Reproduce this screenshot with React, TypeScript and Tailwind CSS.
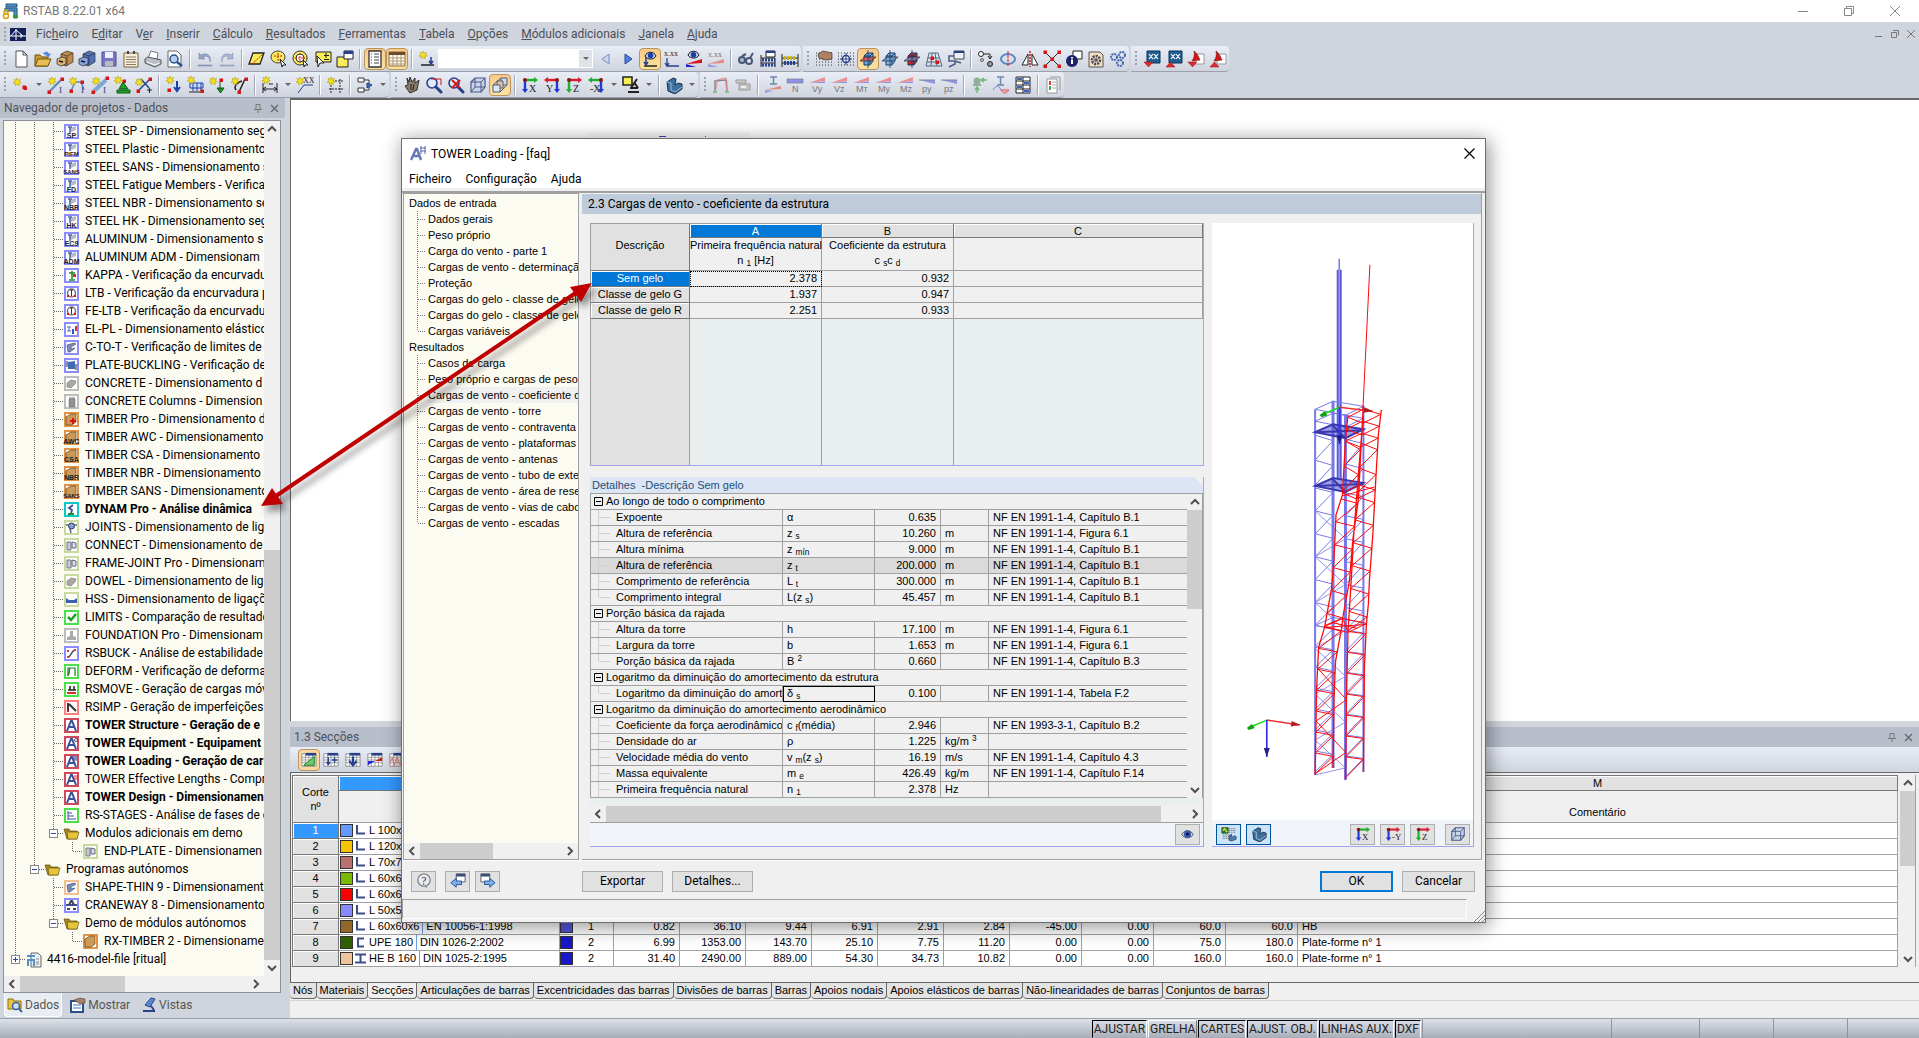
import type { ReactNode } from 'react'
import clsx from 'clsx'

const UI = 'font-[Roboto,sans-serif] text-xs'
const GRID = "font-['Liberation_Sans',Arial,sans-serif] text-[11px]"

/* ---------- toolbar icons, all on an 18x18 grid ---------- */

const Star = ({ x = 4, y = 4 }: { x?: number; y?: number }) => (
  <path
    d={`M${x} ${y - 4}l1 2.3 2.5-1-1.2 2.4 1.9 1-2.4.7.4 2.4-2-1.6-1.8 1.8.1-2.6-2.6-.3 2.1-1.4-1-2.3 2.2.8z`}
    fill="#f6e21b"
    stroke="#a89400"
    strokeWidth=".5"
  />
)

const Dot = ({ x, y }: { x: number; y: number }) => <rect x={x - 1.5} y={y - 1.5} width="3.500" height="3.500" fill="#d81414" />

const Glyph = ({ x, y, size = 8, fill = '#222', serif, children }: { x: number; y: number; size?: number; fill?: string; serif?: boolean; children: ReactNode }) => (
  <text x={x} y={y} fontSize={size} fill={fill} fontFamily={serif ? 'Liberation Serif' : 'Liberation Sans'}>
    {children}
  </text>
)

const Axis = ({ label, a, b, flip }: { label: string; a: string; b: string; flip?: boolean }) => (
  <>
    <path d={flip ? 'M15 4H3' : 'M3 4h11'} stroke={a} strokeWidth="2.4" />
    <path d={flip ? 'M5 1L1 4l4 3z' : 'M13 1l4 3-4 3z'} fill={a} />
    <path d={flip ? 'M14 4v10' : 'M4 4v10'} stroke={b} strokeWidth="2.4" />
    <path d={flip ? 'M11 13l3 4 3-4z' : 'M1 13l3 4 3-4z'} fill={b} />
    <circle cx={flip ? 14 : 4} cy="4" r="2" fill="#8c1414" />
    <Glyph x={flip ? 3 : 8} y={16} size={10} serif>{label}</Glyph>
  </>
)

const Force = ({ label }: { label: string }) => (
  <>
    <path d="M1 7L17 1v4z" fill="#ec8f8f" />
    <path d="M1 7h16v-1.5z" fill="#8a8fdf" />
    <Glyph x={4} y={16} size={9} fill="#777">{label}</Glyph>
  </>
)

const Load = ({ label }: { label: string }) => (
  <>
    <path d="M1 4h16v4z" fill="#8f93ea" />
    <path d="M1 4h16" stroke="#888" />
    <Glyph x={4} y={16} size={9} fill="#777">{label}</Glyph>
  </>
)

const Prism = ({ fill, plane }: { fill: string; plane: string }) => (
  <>
    <path d="M5 6l3-3h6v8l-3 4H5z" fill={fill} stroke="#123a66" />
    <path d="M5 6h6v8M11 6l3-3" stroke="#123a66" fill="none" />
    <path d="M1 11l5-4h11l-5 4z" fill={plane} fillOpacity=".7" stroke="#222" strokeWidth=".7" />
    <path d="M9 0v18" stroke="#123a66" strokeWidth=".8" />
  </>
)

const Lens = () => (
  <>
    <circle cx="7" cy="7" r="5" fill="#dfeaf9" stroke="#27408b" strokeWidth="1.6" />
    <path d="M11 11l5 5" stroke="#27408b" strokeWidth="3" strokeLinecap="round" />
  </>
)

const Drawer = ({ a, b }: { a: string; b: string }) => (
  <>
    <path d="M5 4l6-3 6 2v9l-7 4-5-2z" fill={a} stroke="#333" strokeWidth=".7" />
    <path d="M5 4l6 2 6-3M11 6v10" stroke="#333" strokeWidth=".7" fill="none" />
    <path d="M1 9l5-2 4 1v6l-5 2-4-2z" fill={b} stroke="#222" strokeWidth=".7" />
    <path d="M3 11l4 1" stroke="#111" strokeWidth="1.4" />
  </>
)

const Cube = () => (
  <>
    <path d="M2 6l4-4h10v9l-4 5H2z" fill="#c9d4ea" stroke="#4a5a86" strokeWidth="1.2" />
    <path d="M2 6h10v10M12 6l4-4M6 2v9h10M6 11l-4 5" stroke="#4a5a86" fill="none" />
  </>
)

const Solid = () => (
  <>
    <path d="M2 6l6-4 3 1-1 6 3-2 4 1v5l-7 5-7-3z" fill="#3f6f9f" stroke="#12263c" strokeWidth=".9" />
    <path d="M2 6l4 1v7l4 2 7-5" stroke="#9fc4e6" fill="none" strokeWidth=".9" />
  </>
)

const Excel = ({ down, pdf }: { down?: boolean; pdf?: boolean }) => (
  <>
    {pdf ? (
      <>
        <path d="M8 4h9v10H8z" fill="#fff" stroke="#999" />
        <path d="M7 1c4 3 5 7 6 9l-8 1c2-3 3-6 2-10z" fill="#d41616" stroke="#701010" strokeWidth=".6" />
      </>
    ) : (
      <>
        <path d="M4 1h13v12H4z" fill="#1f5f95" stroke="#0f3557" />
        <path d="M6 4l4 5M10 4l-4 5M11 4l4 5M15 4l-4 5" stroke="#fff" strokeWidth="1.2" />
      </>
    )}
    <path d={down ? 'M1 12h9l-4.500 5z' : 'M1 17h9l-4.500-5z'} fill="#e02c2c" stroke="#8a1010" strokeWidth=".5" />
  </>
)

const Dots = () => (
  <path d="M1 3h16M1 6h16M1 9h16M1 12h16M1 15h16" stroke="#333" strokeDasharray="1 2" />
)

const Eye = () => (
  <>
    <path d="M1 9c4-7 12-7 16 0-4 6-12 6-16 0z" fill="#d6dff3" stroke="#222" />
    <circle cx="9" cy="8.500" r="5" fill="#3658b8" />
    <circle cx="9" cy="8.500" r="2" fill="#0a0f30" />
  </>
)

const SheetIcon = ({ children }: { children: ReactNode }) => (
  <>
    <path d="M1 2h16v14H1z" fill="#fff" stroke="#888" />
    <path d="M1 6h16M1 9h16M1 12h16M5 3v13M9 3v13M13 3v13" stroke="#999" />
    <path d="M5 1h12v3H5z" fill="#27408b" />
    {children}
  </>
)

const ICONS: Record<string, ReactNode> = {
  new: <path d="M4 1h7l4 4v12H4zM11 1v4h4" fill="#fff" stroke="#555" />,
  open: (
    <>
      <path d="M1 5h5l2 2h6v9H1z" fill="#c99a34" stroke="#6d5210" />
      <path d="M4 9h13l-3 7H1z" fill="#e8bd55" stroke="#6d5210" />
      <path d="M9 4c2-3 5-3 6 0l2-1-2 4-4-2 2 0" fill="#4d86d8" />
    </>
  ),
  boxBrown: <Drawer a="#c08a4a" b="#e0b373" />,
  boxBlue: <Drawer a="#4f71b8" b="#86a5de" />,
  save: (
    <>
      <path d="M2 2h14v14H2z" fill="#7777c8" stroke="#4c4c92" />
      <path d="M5 2h8v6H5z" fill="#eef" />
      <path d="M5 11h8v5H5z" fill="#bbb" />
    </>
  ),
  clip: (
    <>
      <path d="M2 3h14v14H2z" fill="#f6efe0" stroke="#7b5e32" />
      <path d="M4 7h10M4 9.500h10M4 12h10M4 14.500h10" stroke="#8a7a5a" />
      <path d="M5 1h2v3H5zM11 1h2v3h-2z" fill="#444" />
    </>
  ),
  print: (
    <>
      <path d="M4 8l3-7 7 2-1 6z" fill="#fff" stroke="#777" />
      <path d="M1 9l3-2 13 3v4l-6 3-10-4z" fill="#b9bfc9" stroke="#555" />
      <path d="M3 12l8 3 4-2" stroke="#fff" fill="none" />
    </>
  ),
  preview: (
    <>
      <path d="M2 1h9l4 4v12H2z" fill="#fff" stroke="#666" />
      <circle cx="8" cy="9" r="4" fill="#b5d0ee" stroke="#27508b" strokeWidth="1.500" />
      <path d="M11 12l5 4" stroke="#27508b" strokeWidth="2.500" />
    </>
  ),
  undo: <path d="M3 3v6h6l-2-2c4-2 7 0 7 5 2-7-4-10-9-7zM2 15h14v1H2z" fill="#93a6c6" stroke="#6c7fa2" strokeWidth=".5" />,
  redo: <path d="M15 3v6H9l2-2c-4-2-7 0-7 5-2-7 4-10 9-7zM2 15h14v1H2z" fill="#a5b6d0" stroke="#7e90b0" strokeWidth=".5" />,
  selPoly: (
    <>
      <path d="M5 3h11l-4 11H1z" fill="#f7ec5a" stroke="#222" strokeWidth="1.300" />
      <path d="M4 14L15 4" stroke="#d01414" strokeDasharray="2 1" />
    </>
  ),
  selLasso: (
    <>
      <ellipse cx="8" cy="7" rx="7" ry="6" fill="#f7ec5a" stroke="#444" />
      <path d="M4 6h8M8 3v8" stroke="#d01414" strokeDasharray="2 1" />
      <path d="M10 9l6 6-3 0-1 2z" fill="#fff" stroke="#222" />
    </>
  ),
  selRing: (
    <>
      <circle cx="8" cy="8" r="7" fill="#f7ec5a" stroke="#333" />
      <circle cx="8" cy="8" r="4" fill="#fff" stroke="#333" />
      <path d="M8 3v10M3 8h10" stroke="#d01414" strokeDasharray="2 1" />
      <path d="M11 10l5 5-3 0-1 2z" fill="#fff" stroke="#222" />
    </>
  ),
  selAdd: (
    <>
      <path d="M2 2h15v10H2z" fill="#f7ec5a" stroke="#222" />
      <path d="M12 3v5M10 5.500h5M10 9.500h5" stroke="#222" />
      <path d="M3 6l7 7h-4l-2 4z" fill="#fff" stroke="#222" />
    </>
  ),
  selNew: (
    <>
      <path d="M1 7h11v10H1z" fill="#f7ec5a" stroke="#222" />
      <path d="M8 1h9v8H8z" fill="#fff" stroke="#222" />
      <path d="M8 1h9v3H8z" fill="#27408b" />
    </>
  ),
  list: (
    <>
      <path d="M3 1h12v16H3z" fill="#fff" stroke="#333" strokeWidth="1.300" />
      <path d="M5 4h1M5 7h1M5 10h1M5 13h1M8 4h5M8 7h5M8 10h5M8 13h5" stroke="#444" />
    </>
  ),
  table: (
    <>
      <path d="M1 2h16v14H1z" fill="#fff" stroke="#8b6a3c" />
      <path d="M1 2h16v3H1z" fill="#6b4b2c" />
      <path d="M1 8h16M1 11h16M1 14h16M5 5v11M9 5v11M13 5v11" stroke="#b29264" />
    </>
  ),
  lcNew: (
    <>
      <Star x={5} y={5} />
      <path d="M3 15h13" stroke="#222" strokeWidth="1.500" />
      <path d="M13 7v6M11 11l2 3 2-3" stroke="#27408b" fill="none" strokeWidth="1.500" />
    </>
  ),
  prev: <path d="M12 4L5 9l7 5z" fill="#c9d7f0" stroke="#7690c4" />,
  next: <path d="M6 4l7 5-7 5z" fill="#4f7ee0" stroke="#2a4a9c" />,
  eyeLoad: (
    <>
      <path d="M3 16h13" stroke="#222" strokeWidth="1.500" />
      <path d="M5 6v9M3 12l2 3 2-3" stroke="#27408b" fill="none" strokeWidth="1.500" />
      <path d="M4 6c2-5 9-5 11 0-2 4-9 4-11 0z" fill="#cfdcf5" stroke="#111" />
      <circle cx="9.500" cy="5.500" r="2.800" fill="#1d3fae" />
    </>
  ),
  xxx: (
    <>
      <Glyph x={1} y={6} serif>x.xx</Glyph>
      <path d="M4 8v8h12M2 13l2 3 2-3" stroke="#27408b" fill="none" strokeWidth="1.300" />
    </>
  ),
  eyeRes: (
    <>
      <path d="M1 14l16-5v4z" fill="#d81414" />
      <path d="M1 14v3h10z" fill="#2424c8" />
      <path d="M3 5c2-5 9-5 11 0-2 4-9 4-11 0z" fill="#cfdcf5" stroke="#111" />
      <circle cx="8.500" cy="4.800" r="2.800" fill="#1d3fae" />
    </>
  ),
  xxxRes: (
    <>
      <Glyph x={1} y={7} fill="#777" serif>x.xx</Glyph>
      <path d="M1 14l16-5v4z" fill="#e88b8b" />
      <path d="M1 14v3h10z" fill="#9a9ae0" />
    </>
  ),
  gears: (
    <>
      <circle cx="5" cy="10" r="3" fill="#aeb8cc" stroke="#4a5878" strokeWidth="2" />
      <circle cx="12" cy="11" r="3" fill="#dfe4ee" stroke="#4a5878" strokeWidth="2" />
      <path d="M5 6l4-2M13 8l3-5" stroke="#4a5878" strokeWidth="2" />
    </>
  ),
  abacusWin: (
    <>
      <path d="M2 8h14v9M2 5v12M2 13h14" stroke="#222" fill="none" />
      <path d="M3 10h13M3 15h13" stroke="#27408b" strokeWidth="3" strokeDasharray="2 1" />
      <path d="M7 1h9v6H7z" fill="#fff" stroke="#222" />
      <path d="M7 1h9v2H7z" fill="#27408b" />
    </>
  ),
  abacus: (
    <>
      <path d="M1 4v13M17 4v13M1 8h16M1 13h16" stroke="#222" fill="none" />
      <path d="M3 8h12" stroke="#c8b81a" strokeWidth="4" strokeDasharray="2 1" />
      <path d="M3 13h12" stroke="#27408b" strokeWidth="4" strokeDasharray="2 1" />
    </>
  ),
  handGrid: (
    <>
      <Dots />
      <path d="M3 4l5-3 9 2v6l-6 1-7-2z" fill="#b08060" stroke="#333" strokeWidth=".7" />
    </>
  ),
  snapGrid: (
    <>
      <Dots />
      <circle cx="9" cy="9" r="3.500" fill="#fff" stroke="#27408b" strokeWidth="1.500" />
      <path d="M9 3v12M3 9h12" stroke="#27408b" />
    </>
  ),
  plane1: <Prism fill="#6fa8e0" plane="#f04040" />,
  plane2: <Prism fill="#8fb8e0" plane="#5f97d0" />,
  plane3: <Prism fill="#e02020" plane="#5f97d0" />,
  mesh: (
    <>
      <path d="M4 3h9l4 13H1zM3 8h11M2 12h13M7 3L6 16M10 3l2 13" stroke="#4a6f86" fill="none" />
      <Dot x={7} y={8} />
      <Dot x={12} y={12} />
    </>
  ),
  objWin: (
    <>
      <path d="M7 1h10v8H7z" fill="#e9eef9" stroke="#444" />
      <path d="M7 1h10v2H7z" fill="#27408b" />
      <path d="M7 6H2v5h6v3l-6 3M8 11l6 2" stroke="#4a5a86" fill="none" strokeWidth="1.500" />
    </>
  ),
  copy: (
    <>
      <circle cx="4" cy="4" r="2.500" fill="#fff" stroke="#222" />
      <path d="M7 4h6v4M11 6l2 3 2-3" stroke="#222" fill="none" />
      <circle cx="5" cy="10" r="1.500" fill="#ccc" stroke="#666" />
      <circle cx="13" cy="14" r="2.500" fill="#999" stroke="#222" />
    </>
  ),
  rotate: (
    <>
      <ellipse cx="9" cy="9" rx="7" ry="5" fill="none" stroke="#5d86c0" strokeWidth="2" />
      <path d="M9 1v16" stroke="#d01414" strokeDasharray="3 1" />
    </>
  ),
  mirror: (
    <>
      <path d="M7 4v11H1zM11 4v11h6z" fill="#fff" stroke="#222" />
      <path d="M9 1v16" stroke="#d01414" strokeDasharray="2 1" strokeWidth="1.500" />
    </>
  ),
  cross: (
    <>
      <path d="M2 2l14 14M16 2L2 16" stroke="#222" />
      <Dot x={2} y={2} />
      <Dot x={16} y={2} />
      <Dot x={2} y={16} />
      <Dot x={16} y={16} />
      <Dot x={9} y={9} />
    </>
  ),
  info: (
    <>
      <path d="M8 1h9v8H8z" fill="#fff" stroke="#222" />
      <circle cx="7" cy="11" r="6" fill="#1c2468" />
      <path d="M7 9.500V14M7 7v1.500" stroke="#fff" strokeWidth="2" />
    </>
  ),
  settings: (
    <>
      <path d="M2 2h11l3 3v12H2z" fill="#f3dfc0" stroke="#555" />
      <circle cx="9" cy="10" r="4" fill="none" stroke="#445" strokeWidth="2.500" strokeDasharray="2 1" />
      <circle cx="9" cy="10" r="2" fill="#667" />
    </>
  ),
  cogs: (
    <>
      <circle cx="5" cy="7" r="3" fill="none" stroke="#4868a8" strokeWidth="2" strokeDasharray="2 .8" />
      <circle cx="13" cy="5" r="3" fill="none" stroke="#4868a8" strokeWidth="2" strokeDasharray="2 .8" />
      <circle cx="11" cy="13" r="3" fill="none" stroke="#4868a8" strokeWidth="2" strokeDasharray="2 .8" />
    </>
  ),
  xlsOut: <Excel down />,
  xlsIn: <Excel />,
  pdfOut: <Excel pdf down />,
  pdfIn: <Excel pdf />,
  node: (
    <>
      <Star x={5} y={6} />
      <Dot x={12} y={11} />
      <Dot x={13} y={12} />
    </>
  ),
  line: (
    <>
      <path d="M2 16L15 3" stroke="#5d86c0" strokeWidth="2" />
      <Star x={5} y={5} />
      <Dot x={15} y={3} />
      <Dot x={2} y={16} />
      <Glyph x={12} y={17} size={9} fill="#27408b" serif>I</Glyph>
    </>
  ),
  polyline: (
    <>
      <path d="M2 15L6 6h6l3 8" stroke="#5d86c0" strokeWidth="1.500" fill="none" />
      <Star x={4} y={5} />
      <Dot x={13} y={6} />
      <Dot x={2} y={15} />
      <Glyph x={12} y={17} size={9} fill="#27408b" serif>I</Glyph>
    </>
  ),
  beam: (
    <>
      <path d="M3 15L15 4" stroke="#7ea6d8" strokeWidth="4" />
      <Star x={5} y={5} />
      <Dot x={16} y={2} />
      <Dot x={2} y={16} />
      <Glyph x={12} y={17} size={9} fill="#27408b" serif>I</Glyph>
    </>
  ),
  support: (
    <>
      <Star x={5} y={4} />
      <Dot x={11} y={5} />
      <path d="M10 6l5 7H6zM4 14h13v3H4z" fill="#1fa02a" stroke="#0c5a14" />
    </>
  ),
  hinge: (
    <>
      <path d="M3 15L15 3M6 3l8 9" stroke="#27408b" strokeWidth="1.500" />
      <Star x={4} y={6} />
      <Dot x={15} y={3} />
      <Dot x={3} y={15} />
      <path d="M12 14h5M14.500 12v5" stroke="#222" />
    </>
  ),
  nodeLoad: (
    <>
      <Star x={5} y={4} />
      <Dot x={4} y={14} />
      <path d="M12 5v8M9 11l3 4 3-4" stroke="#1c3fb0" strokeWidth="2" fill="none" />
    </>
  ),
  memberLoad: (
    <>
      <path d="M3 7h13v5H3z" fill="#cddcf5" stroke="#1c3fb0" />
      <path d="M6 7v8M10 7v8M14 7v8" stroke="#1c3fb0" />
      <path d="M2 16h15" stroke="#222" />
      <Star x={4} y={4} />
      <Dot x={15} y={15} />
    </>
  ),
  disp: (
    <>
      <Star x={4} y={5} />
      <Dot x={12} y={4} />
      <path d="M11 6v8M8 12h7l-3.500 5z" fill="#1fa02a" stroke="#0c5a14" />
    </>
  ),
  imperf: (
    <>
      <path d="M8 16L14 3M5 14c-3-4 2-8 6-9" stroke="#222" fill="none" strokeWidth="1.500" />
      <Star x={4} y={5} />
      <Dot x={15} y={3} />
      <Dot x={8} y={16} />
    </>
  ),
  dim: (
    <>
      <Star x={5} y={4} />
      <path d="M2 7v10M16 7v10M2 13h14M5 11l-3 2 3 2M13 11l3 2-3 2M8 8l4 0" stroke="#222" fill="none" />
    </>
  ),
  note: (
    <>
      <Star x={4} y={5} />
      <Glyph x={7} y={7} size={8} serif>XX</Glyph>
      <path d="M17 9H8l-6 8" stroke="#27408b" fill="none" />
    </>
  ),
  guide: (
    <>
      <path d="M3 5h14M3 13h14M5 3v14M14 3v14" stroke="#222" strokeDasharray="2 1" />
      <Star x={5} y={5} />
    </>
  ),
  flow: (
    <>
      <path d="M2 2h6v4H2zM2 12h6v4H2zM8 4h5v4M8 14h5v-3" stroke="#333" fill="#fff" />
      <path d="M11 7l5 2-5 3z" fill="#3f78c8" stroke="#1c3f80" />
    </>
  ),
  hand: (
    <>
      <path d="M4 2l2 4 1-5 2 5 3-4v5l4-3-2 10-7 3-5-7 3-1z" fill="#8a7a6a" stroke="#222" strokeWidth=".9" />
      <path d="M8 8v6M11 8l-1 6" stroke="#222" />
    </>
  ),
  zoomWin: <><Lens /><path d="M6 3h10v6" stroke="#d01414" fill="none" /></>,
  zoomOff: <><Lens /><path d="M5 4l8 8M13 4l-8 8" stroke="#d81414" strokeWidth="2" /></>,
  cube: <Cube />,
  boxes: (
    <>
      <path d="M10 2h6v7h-6z" fill="#cfd8ea" stroke="#4a5a86" />
      <path d="M6 5h6v7H6z" fill="#d8c8a8" stroke="#6a5a66" />
      <path d="M2 9h7v7H2zM2 9l8-7M9 16l7-7" fill="#dfe6f3" stroke="#4a5a86" />
    </>
  ),
  viewX: <Axis label="X" a="#20b030" b="#2038d8" />,
  viewY: <Axis label="Y" a="#d82030" b="#2038d8" flip />,
  viewZ: <Axis label="Z" a="#d82030" b="#20b030" />,
  viewMX: <Axis label="-X" a="#20b030" b="#2038d8" flip />,
  viewMY: <Axis label="-Y" a="#d82030" b="#2038d8" />,
  lamp: (
    <>
      <path d="M1 1h9v8H1z" fill="#f7ec5a" stroke="#222" strokeWidth="1.500" />
      <path d="M15 3l-6 9M8 12h8M6 16h11M12 6l4 6" stroke="#222" strokeWidth="2" />
    </>
  ),
  solid: <Solid />,
  deform: (
    <>
      <path d="M3 16V5l11-1 1 12" stroke="#8a8a8a" fill="none" strokeWidth="1.500" />
      <path d="M3 16C5 10 5 8 5 4l9-2c2 4 0 8 1 14" stroke="#e08888" fill="none" />
      <path d="M1 15h4v2H1zM13 15h4v2h-4z" fill="#8abf90" />
    </>
  ),
  plug: (
    <>
      <path d="M2 4h10v3H2z" fill="#ccc" stroke="#999" />
      <path d="M5 8h11v6H5z" fill="#c4c4c4" stroke="#999" />
      <path d="M7 10h5v2H7z" fill="#eee" />
    </>
  ),
  secForce: (
    <>
      <path d="M6 1h7M9.500 1v7M6 8h7" stroke="#6d86b0" strokeWidth="1.500" />
      <path d="M1 14l16-4v3z" fill="#e08888" />
      <path d="M1 14v3l8-2z" fill="#9a9ae0" />
    </>
  ),
  N: (
    <>
      <path d="M1 3h16v4H1z" fill="#8f93ea" stroke="#777" strokeWidth=".6" />
      <Glyph x={6} y={16} size={9} fill="#777">N</Glyph>
    </>
  ),
  Vy: <Force label="Vy" />,
  Vz: <Force label="Vz" />,
  MT: <Force label="Mт" />,
  My: <Force label="My" />,
  Mz: <Force label="Mz" />,
  py: <Load label="py" />,
  pz: <Load label="pz" />,
  reaction: (
    <>
      <circle cx="7" cy="5" r="3.500" fill="#8fae94" />
      <path d="M3 8h8v2H3z" fill="#8fae94" />
      <path d="M7 17v-5M5 14l2-3 2 3M17 4h-5M14 2l-3 2 3 2" stroke="#6fb87a" fill="none" strokeWidth="1.500" />
    </>
  ),
  secWave: (
    <>
      <path d="M5 1h7M8.500 1v8M5 9h7" stroke="#6d86b0" strokeWidth="1.500" />
      <path d="M1 14c3-5 6-5 8 0" fill="none" stroke="#8080d8" />
      <path d="M9 14c2 4 5 4 8 0z" fill="#f4b0b0" stroke="#d06060" />
    </>
  ),
  sections: (
    <>
      <path d="M2 1h14v16H2z" fill="#fff" stroke="#222" />
      <path d="M2 5h14M2 9h14M2 13h14M9 1v16" stroke="#222" />
      <path d="M3 3h5M10 7h5M3 11h5M10 15h5" stroke="#3d5fc0" strokeWidth="2" />
    </>
  ),
  report: (
    <>
      <path d="M3 3h10v14H3z" fill="#fff" stroke="#999" />
      <path d="M6 1h10v13" stroke="#999" fill="none" />
      <path d="M5 6h2M5 8h2" stroke="#d04040" strokeWidth="2" />
      <path d="M5 11h2M5 13h2" stroke="#40b040" strokeWidth="2" />
      <path d="M8 6h4M8 9h4M8 12h4" stroke="#aaa" />
    </>
  ),
  eye: <Eye />,
  legend: (
    <>
      <path d="M1 2h7v6H1z" fill="#2c8a3a" stroke="#1a4d20" />
      <path d="M2 5l2-2 3 4" stroke="#f0e030" strokeWidth="1.500" fill="none" />
      <path d="M9 3h8M9 5h8M9 7h8M2 10h7M2 12h7M2 14h7" stroke="#555" strokeDasharray="1 1" />
      <path d="M9 11l3-2v4l3-2 2 1v3l-5 2-3-1z" fill="#4f7fae" stroke="#1a3350" strokeWidth=".7" />
    </>
  ),
  help: (
    <>
      <circle cx="9" cy="8" r="7" fill="#e8eaee" stroke="#888" strokeWidth="1.500" />
      <path d="M11 14l2 3-5-2z" fill="#888" />
      <Glyph x={6} y={13} size={13} fill="#1f3a70" serif>?</Glyph>
    </>
  ),
  back: (
    <>
      <path d="M7 1h10v9H7z" fill="#fff" stroke="#555" />
      <path d="M7 1h10v3H7z" fill="#3a4c80" />
      <path d="M13 9H7V6l-6 5 6 5v-3h6z" fill="#7fb0ee" stroke="#1f4a90" />
    </>
  ),
  forward: (
    <>
      <path d="M1 1h10v9H1z" fill="#fff" stroke="#555" />
      <path d="M1 1h10v3H1z" fill="#3a4c80" />
      <path d="M5 9h6V6l6 5-6 5v-3H5z" fill="#7fb0ee" stroke="#1f4a90" />
    </>
  ),
  sheet1: <SheetIcon><path d="M3 15L15 5v10z" fill="#6cc870" stroke="#1f7a28" /></SheetIcon>,
  sheet2: <SheetIcon><path d="M6 6v8M4 11l2 3 2-3M10 9h6M13 6v6" stroke="#27408b" strokeWidth="1.500" fill="none" /></SheetIcon>,
  sheet3: <SheetIcon><path d="M9 5v9M5 10l4 5 4-5" stroke="#27408b" strokeWidth="2.500" fill="none" /></SheetIcon>,
  sheet4: <SheetIcon><path d="M9 10l8-4v4z" fill="#d81414" /><path d="M1 10h8l-8 5z" fill="#2424d8" /></SheetIcon>,
  sheet5: <SheetIcon><path d="M1 11l3-4 2 8 3-9 3 8 4-5" stroke="#e08888" strokeWidth="1.500" fill="none" /></SheetIcon>,
}

const Icon = ({ name, size = 18 }: { name: string; size?: number }) => (
  <svg width={size} height={size} viewBox="0 0 18 18" className="shrink-0" aria-hidden="true">
    {ICONS[name]}
  </svg>
)

/* ---------- toolbars ---------- */

// '|' is a separator, 'v' a drop-down arrow, '*' marks a pressed button
const ROW1 = [
  'new open boxBrown boxBlue save clip print preview | undo redo | selPoly selLasso selRing selAdd selNew | *list *table | lcNew combo prev next *eyeLoad xxx eyeRes xxxRes | gears abacusWin abacus',
  'handGrid snapGrid *plane1 plane2 plane3 mesh objWin | copy rotate mirror cross info settings cogs',
  'xlsOut xlsIn pdfOut pdfIn',
]
const ROW2 = [
  'node v line polyline beam support hinge | nodeLoad memberLoad disp imperf | dim v note | guide | flow v',
  'hand zoomWin zoomOff cube *boxes | viewX viewY viewZ viewMX v lamp v | solid v',
  'deform plug | secForce N Vy Vz MT My Mz py pz | reaction secWave sections | report',
]

const Grip = () => (
  <span className="mx-[3px] my-1 w-1 self-stretch bg-[radial-gradient(circle,#9aa2b0_1px,transparent_1px)] bg-[size:4px_4px]" />
)

function ToolStrip({ items }: { items: string }) {
  return (
    <div className="mr-0.5 flex h-[26px] items-center rounded-r-sm border-b border-[#9aa1ad] bg-linear-to-b from-[#e9edf6] to-[#cfd4de]">
      <Grip />
      {items.split(' ').map((item, i) => {
        if (item === '|') return <span key={i} className="mx-[3px] h-5 w-0.5 border-r border-white bg-[#a3a9b5]" />
        if (item === 'v')
          return (
            <button key={i} type="button" aria-label="Mais" className="flex h-6 w-[13px] items-center justify-center">
              <span className="border-x-3 border-t-3 border-x-transparent border-t-[#666]" />
            </button>
          )
        if (item === 'combo')
          return (
            <span key={i} className="mr-0.5 flex h-[19px] items-center bg-white">
              <select aria-label="Caso de carga" className="h-full w-[140px] appearance-none" />
              <span className="flex h-full w-[15px] items-center justify-center border border-white bg-[#dfe2e8]">
                <span className="border-x-3 border-t-3 border-x-transparent border-t-[#666]" />
              </span>
            </span>
          )
        const on = item.startsWith('*')
        const name = item.replace('*', '')
        return (
          <button
            key={i}
            type="button"
            aria-label={name}
            aria-pressed={on}
            className={clsx('flex h-[22px] w-[22px] items-center justify-center', on && 'rounded-sm border border-[#b8955a] bg-linear-to-b from-[#f9c98a] to-[#fbe3a0]')}
          >
            <Icon name={name} />
          </button>
        )
      })}
    </div>
  )
}

const MENU = [
  ['Fic', 'h', 'eiro'], ['E', 'd', 'itar'], ['V', 'e', 'r'], ['', 'I', 'nserir'], ['', 'C', 'álculo'], ['', 'R', 'esultados'],
  ['', 'F', 'erramentas'], ['', 'T', 'abela'], ['', 'O', 'pções'], ['', 'M', 'ódulos adicionais'], ['', 'J', 'anela'], ['', 'A', 'juda'],
]

function AppHeader() {
  return (
    <header>
      <div className="flex h-[22px] items-center bg-white pr-[19px] pl-0.5 text-[#777]">
        <svg width="17" height="17" viewBox="0 0 17 17" aria-hidden="true">
          <path d="M4 1h11v3H4zM3 5h12v3H3z" fill="#4f93cc" stroke="#20527e" />
          <path d="M12 8v7h3V8" fill="#4f93cc" stroke="#20527e" />
          <path d="M11 12h5v3h-5z" fill="#2ba02b" />
          <circle cx="4" cy="9" r="2" fill="none" stroke="#d8a010" strokeWidth="1.500" />
          <circle cx="4" cy="13" r="2.500" fill="none" stroke="#d8a010" strokeWidth="1.500" />
        </svg>
        <h1 className="ml-1 grow">RSTAB 8.22.01 x64</h1>
        <div className="flex gap-9">
          <button type="button" aria-label="Minimizar"><svg width="10" height="10"><path d="M0 5.500h10" stroke="#888" /></svg></button>
          <button type="button" aria-label="Restaurar"><svg width="10" height="10" fill="none" stroke="#888"><path d="M.5 2.500h7v7h-7zM2.500 2V.5h7v7H8" /></svg></button>
          <button type="button" aria-label="Fechar"><svg width="10" height="10"><path d="M0 0l10 10M10 0L0 10" stroke="#888" /></svg></button>
        </div>
      </div>
      <nav className="flex h-6 items-center pr-1 text-[#4a4f5a]">
        <Grip />
        <svg width="16" height="13" viewBox="0 0 16 13" className="mr-2.5" aria-hidden="true">
          <path d="M0 0h16v13H0z" fill="#16205c" />
          <path d="M0 8h16M6 1v11M6 2l7 6M6 2L1 8M11 6v4" stroke="#fff" fill="none" />
        </svg>
        <div className="flex grow gap-[13px]">
          {MENU.map(([a, key, b]) => (
            <button key={a + key + b} type="button">{a}<u>{key}</u>{b}</button>
          ))}
        </div>
        <div className="flex gap-2">
          <button type="button" aria-label="Minimizar documento"><svg width="8" height="8"><path d="M0 6.500h7" stroke="#777" /></svg></button>
          <button type="button" aria-label="Restaurar documento"><svg width="8" height="8" fill="none" stroke="#777"><path d="M.5 2.500h5v5h-5zM2 .5h5.500v5" /></svg></button>
          <button type="button" aria-label="Fechar documento"><svg width="8" height="8"><path d="M0 0l8 8M8 0L0 8" stroke="#777" /></svg></button>
        </div>
      </nav>
      <div className="flex">{ROW1.map((r) => <ToolStrip key={r} items={r} />)}</div>
      <div className="flex">{ROW2.map((r) => <ToolStrip key={r} items={r} />)}</div>
    </header>
  )
}

/* ---------- shared bits ---------- */

function Chevron({ dir }: { dir: 'up' | 'down' | 'left' | 'right' }) {
  const d = { up: 'M1 7l4-4 4 4', down: 'M1 3l4 4 4-4', left: 'M7 1L3 5l4 4', right: 'M3 1l4 4-4 4' }[dir]
  return (
    <button type="button" aria-label={dir} className="flex size-4 shrink-0 items-center justify-center">
      <svg width="10" height="10"><path d={d} fill="none" stroke="#505050" strokeWidth="2" /></svg>
    </button>
  )
}

function PanelTitle({ children }: { children: string }) {
  return (
    <div className="flex h-5 shrink-0 items-center bg-[#b8bfcb] pr-1.5 pl-1 text-[#4b505a]">
      <h2 className="grow">{children}</h2>
      <button type="button" aria-label="Fixar" className="mr-2">
        <svg width="8" height="9" fill="none" stroke="#777"><path d="M2 .5h4v5H2zM0 5.500h8M4 6v3" /></svg>
      </button>
      <button type="button" aria-label="Fechar painel">
        <svg width="9" height="9"><path d="M1 1l7 7M8 1L1 8" stroke="#666" strokeWidth="1.300" /></svg>
      </button>
    </div>
  )
}

/* ---------- project navigator ---------- */

type Item = { cells: string; text: string; frame?: string; tag?: string; art?: string; bold?: boolean }

const B = '#8c8cff'
const G = '#bdbdbd'
const O = '#e0944a'
const L = '#c8daa0'
const V = '#4be04b'
const T = '#d0485f'

const mod = (text: string, frame: string, tag = '', art = 'profile', bold = false): Item => ({ cells: '||+', text, frame, tag, art, bold })

const TREE: Item[] = [
  mod('STEEL SP - Dimensionamento segu', B, 'SP'),
  mod('STEEL Plastic - Dimensionamento', B, 'PIFM'),
  mod('STEEL SANS - Dimensionamento s', B, 'SANS'),
  mod('STEEL Fatigue Members - Verificaç', B, 'FD'),
  mod('STEEL NBR - Dimensionamento se', B, 'NBR'),
  mod('STEEL HK - Dimensionamento seg', B, 'HK'),
  mod('ALUMINUM - Dimensionamento s', B, 'EC9'),
  mod('ALUMINUM ADM - Dimensionam', B, 'ADM'),
  mod('KAPPA - Verificação da encurvadu', B, '', 'kappa'),
  mod('LTB - Verificação da encurvadura p', B, '', 'ltb'),
  mod('FE-LTB - Verificação da encurvadu', B, '', 'ltb'),
  mod('EL-PL - Dimensionamento elástico', B, '', 'elpl'),
  mod('C-TO-T - Verificação de limites de', B, '', 'channel'),
  mod('PLATE-BUCKLING - Verificação de', B, '', 'plate'),
  mod('CONCRETE - Dimensionamento d', G, '', 'block'),
  mod('CONCRETE Columns - Dimension', G, '', 'column'),
  mod('TIMBER Pro - Dimensionamento d', O, '', 'woodPlus'),
  mod('TIMBER AWC - Dimensionamento', O, 'AWC', 'wood'),
  mod('TIMBER CSA - Dimensionamento s', O, 'CSA', 'wood'),
  mod('TIMBER NBR - Dimensionamento', O, 'NBR', 'wood'),
  mod('TIMBER SANS - Dimensionamento', O, 'SANS', 'wood'),
  mod('DYNAM Pro - Análise dinâmica', '#10c8c8', '', 'dynam', true),
  mod('JOINTS - Dimensionamento de lig', L, '', 'joint'),
  mod('CONNECT - Dimensionamento de', L, '', 'connect'),
  mod('FRAME-JOINT Pro - Dimensionam', L, '', 'connect'),
  mod('DOWEL - Dimensionamento de lig', L, '', 'block'),
  mod('HSS - Dimensionamento de ligaçõ', L, '', 'hss'),
  mod('LIMITS - Comparação de resultado', V, '', 'check'),
  mod('FOUNDATION Pro - Dimensionam', G, '', 'found'),
  mod('RSBUCK - Análise de estabilidade', B, '', 'buck'),
  mod('DEFORM - Verificação de deforma', V, '', 'deform'),
  mod('RSMOVE - Geração de cargas móv', V, '', 'move'),
  mod('RSIMP - Geração de imperfeições', '#ff8080', '', 'imp'),
  mod('TOWER Structure - Geração de e', T, '', 'tower', true),
  mod('TOWER Equipment - Equipament', T, '', 'tower1', true),
  mod('TOWER Loading - Geração de car', T, '', 'tower2', true),
  mod('TOWER Effective Lengths - Compr', T, '', 'tower3'),
  mod('TOWER Design - Dimensionamen', T, '', 'tower', true),
  mod('RS-STAGES - Análise de fases de c', V, '', 'stages'),
  { cells: '||-', text: 'Modulos adicionais em demo', art: 'folder' },
  { cells: '|| L', text: 'END-PLATE - Dimensionamen', frame: L, art: 'connect' },
  { cells: '|-', text: 'Programas autónomos', art: 'folder' },
  { cells: '| +', text: 'SHAPE-THIN 9 - Dimensionament', frame: '#f0c090', art: 'channel' },
  { cells: '| +', text: 'CRANEWAY 8 - Dimensionamento', frame: B, art: 'crane' },
  { cells: '| -', text: 'Demo de módulos autónomos', art: 'folder' },
  { cells: '|  L', text: 'RX-TIMBER 2 - Dimensioname', frame: O, art: 'wood' },
  { cells: 'x', text: '4416-model-file [ritual]', art: 'file' },
]

const TowerA = <path d="M3 13L7 3h1l4 10M5 9h5" stroke="#3a4f98" strokeWidth="2" fill="none" />

const ART: Record<string, ReactNode> = {
  profile: <><path d="M5 4l7-2v4l-5 2z" fill="#b8bcc4" /><path d="M4 3h4M6 3v6" stroke="#4a68a8" strokeWidth="1.500" /></>,
  kappa: <><path d="M8 3v8M5 12h6M5 5h6" stroke="#1f8a2a" strokeWidth="1.500" /><path d="M9 6h3v3H9z" fill="#d83030" /></>,
  ltb: <><circle cx="7.500" cy="7" r="4" fill="none" stroke="#777" strokeWidth="1.500" /><path d="M6 4h3M7.500 4v6" stroke="#333" /><path d="M3 9h2v2H3zM10 9h2v2h-2z" fill="#d81414" /></>,
  elpl: <><path d="M3 5h4M5 5v4M3 9h4" stroke="#4a68a8" /><path d="M8 7h2v5H8z" fill="#3050d0" /><path d="M11 4h2v5h-2z" fill="#d83030" /></>,
  channel: <path d="M3 5l7-2 2 1-5 3v2l4-1-5 4H4z" fill="#7d8fb5" stroke="#333f60" strokeWidth=".6" />,
  plate: <><path d="M4 4l7-1v8H4z" fill="#3d6bb8" /><path d="M3 3v6M12 6v6" stroke="#222" /></>,
  block: <path d="M3 7l4-3 5 1-1 3-4 4-4-1z" fill="#a9a9a0" stroke="#777" strokeWidth=".6" />,
  column: <><path d="M5 5h6v8H5z" fill="#909498" stroke="#666" strokeWidth=".5" /><path d="M6 3v2M8 3v2M10 3v2" stroke="#666" /></>,
  wood: <path d="M2 5l5-3h5v8l-4 3H2z" fill="#c99a58" stroke="#7a5220" strokeWidth=".8" />,
  woodPlus: <><path d="M2 5l5-3h5v8l-4 3H2z" fill="#c99a58" stroke="#7a5220" strokeWidth=".8" /><path d="M9 6v6M6 9h6" stroke="#e01010" strokeWidth="2" /></>,
  dynam: <><path d="M9 3L5 6l3 2-1 4" stroke="#3a4f98" fill="none" strokeWidth="1.800" /><path d="M4 12h6" stroke="#1f8a2a" strokeWidth="2" /></>,
  joint: <><circle cx="7.500" cy="6" r="3" fill="#7d9fe0" stroke="#334" /><path d="M2 5h3M10 5h3M6 9l1 4" stroke="#667" strokeWidth="1.500" /></>,
  connect: <><path d="M3 4h4v8H3z" fill="#c5c9d0" stroke="#778" /><path d="M8 4l4 1v5H8z" fill="#d8deee" stroke="#667" /></>,
  hss: <path d="M2 11h11V6l-3 2H5L2 6z" fill="#3d5fb0" />,
  check: <path d="M4 7l3 3 5-6" stroke="#18a018" strokeWidth="2.500" fill="none" />,
  found: <path d="M3 12V9l3-1V3h3v5l3 1v3z" fill="#aaa" />,
  buck: <><path d="M4 11C8 10 6 6 11 4" stroke="#445" fill="none" strokeWidth="1.500" /><path d="M3 10h2v2H3zM10 3h2v2h-2zM3 4h2v2H3z" fill="#c04040" /></>,
  deform: <path d="M4 12V4h7v8M4 12c2-3 1-5 2-8" stroke="#1f7a2a" strokeWidth="1.200" fill="none" />,
  move: <><path d="M4 8h8M6 4v4M10 4v4" stroke="#222" strokeWidth="1.500" /><path d="M3 10h9v2H3z" fill="#d83030" /></>,
  imp: <><path d="M4 3v9M5 4l7 7" stroke="#333" strokeWidth="2" /><path d="M3 10h2v2H3z" fill="#c02020" /></>,
  tower: TowerA,
  tower1: <>{TowerA}<circle cx="12" cy="4" r="1.500" fill="none" stroke="#555" /></>,
  tower2: <>{TowerA}<path d="M9 3h4M9 5h4M10 2v5M12 2v5" stroke="#3a4f98" strokeWidth=".8" /></>,
  tower3: <>{TowerA}<path d="M11 3v5M13 3v5" stroke="#d83030" /></>,
  stages: <path d="M4 3v9M4 5h4M4 8h6M4 11h8" stroke="#3a4f98" fill="none" />,
  crane: <><path d="M2 7h11" stroke="#3a4f98" strokeWidth="2" /><path d="M5 7l2-4h1l2 4M3 11h3M9 11h3" stroke="#445" strokeWidth="2" fill="none" /></>,
  folder: <><path d="M0 3h5l1 2h7v8H3z" fill="#a8881c" stroke="#5c4a08" strokeWidth=".7" /><path d="M3 6h12l-2 7H4z" fill="#e6c53a" stroke="#6d5810" strokeWidth=".7" /></>,
  file: <><path d="M5 1h7l3 3v11H5z" fill="#eee" stroke="#666" /><path d="M1 3h8v2H1zM1 7h8v2H1zM7 9h2v5H7zM1 9h2v5H1z" fill="#4f93cc" /><path d="M10 7h3M10 10h3M10 12h3" stroke="#888" /></>,
}

function Connector({ kind }: { kind: string }) {
  const dots = { stroke: '#666', strokeDasharray: '1 1' }
  const box = kind === '-' || kind === 'x'
  return (
    <svg width="19" height="18" className="shrink-0" aria-hidden="true">
      {(kind === '|' || kind === '+') && <path d="M9.500 0v18" {...dots} />}
      {(kind === 'L' || box) && <path d="M9.500 0v9" {...dots} />}
      {kind !== '|' && kind !== ' ' && <path d="M10 9.500h9" {...dots} />}
      {box && <rect x="5.500" y="5.500" width="8" height="8" fill="#fff" stroke="#888" />}
      {box && <path d="M7 9.500h5" stroke="#2a4ab0" />}
      {kind === 'x' && <path d="M9.500 7v5" stroke="#2a4ab0" />}
    </svg>
  )
}

function ModuleIcon({ item }: { item: Item }) {
  return (
    <svg width="15" height="15" viewBox="0 0 15 15" className="ml-px shrink-0 overflow-visible" aria-hidden="true">
      {item.frame && <rect x="1" y="1" width="13" height="13" fill="#fff" stroke={item.frame} strokeWidth="2" />}
      {ART[item.art ?? 'profile']}
      {item.tag && (
        <text x="7.500" y="14" textAnchor="middle" fontSize={item.tag.length > 3 ? 6 : 7} fontFamily="Liberation Sans" fontWeight="bold" fill="#222">
          {item.tag}
        </text>
      )}
    </svg>
  )
}

function Navigator() {
  return (
    <aside className="flex w-[285px] shrink-0 flex-col">
      <PanelTitle>Navegador de projetos - Dados</PanelTitle>
      <div className="mt-0.5 mr-1 ml-[3px] flex min-h-0 grow flex-col border border-[#8a909c] bg-[#f0f0f0]">
        <div className="flex min-h-0 grow">
          <ul className="min-w-0 grow overflow-hidden bg-[#fcfbf2] pt-px pl-0.5">
            {TREE.map((item) => (
              <li key={item.text} className="flex h-[18px] items-center text-black">
                {item.cells.split('').map((c, i) => <Connector key={i} kind={c} />)}
                <ModuleIcon item={item} />
                <span className={clsx('ml-1.5 whitespace-nowrap', item.bold && 'font-bold')}>{item.text}</span>
              </li>
            ))}
          </ul>
          <div className="flex w-4 flex-col">
            <Chevron dir="up" />
            <div className="grow" />
            <div className="h-[410px] bg-[#cdcdcd]" />
            <Chevron dir="down" />
          </div>
        </div>
        <div className="flex pr-4">
          <Chevron dir="left" />
          <div className="w-[105px] bg-[#cdcdcd]" />
          <div className="grow" />
          <Chevron dir="right" />
        </div>
      </div>
      <div role="tablist" className="flex h-[25px] items-start gap-2 pl-1 text-[#555]">
        <button type="button" role="tab" aria-selected className="flex h-6 items-center gap-0.5 rounded-b border border-t-0 border-white bg-[#e8edf2] px-0.5">
          <svg width="16" height="16" viewBox="0 0 16 16" aria-hidden="true"><path d="M1 2h5l1 2h7v8H1z" fill="#e6c53a" stroke="#8a7010" /><circle cx="9" cy="9" r="3.500" fill="#cfe0f5" stroke="#3a5fa8" strokeWidth="1.500" /><path d="M12 12l3 3" stroke="#3a5fa8" strokeWidth="2" /></svg>
          Dados
        </button>
        <button type="button" role="tab" className="flex h-6 items-center gap-0.5">
          <svg width="16" height="16" viewBox="0 0 16 16" aria-hidden="true"><path d="M1 4h12v11H1z" fill="#fff" stroke="#27508b" strokeWidth="2" /><path d="M3 8h8M3 11h8" stroke="#3d6fd0" /><path d="M4 3l6-2 5 1v4l-5 1z" fill="#a88068" stroke="#444" strokeWidth=".6" /></svg>
          Mostrar
        </button>
        <button type="button" role="tab" className="ml-1 flex h-6 items-center gap-0.5">
          <svg width="15" height="16" viewBox="0 0 15 16" aria-hidden="true"><path d="M9 1l4 1-5 8-5-2z" fill="#5d86d8" stroke="#27408b" /><path d="M9 9l3 4M1 14h12" stroke="#27408b" strokeWidth="2" /></svg>
          Vistas
        </button>
      </div>
    </aside>
  )
}

/* ---------- sections table ---------- */

type Section = { color: string; shape: string; name: string; mat?: string; vals: string[]; comment?: string }

const SECTIONS: Section[] = [
  { color: '#6699ff', shape: 'L', name: 'L 100x', vals: [] },
  { color: '#f8c400', shape: 'L', name: 'L 120x', vals: [] },
  { color: '#bc6f6f', shape: 'L', name: 'L 70x7', vals: [] },
  { color: '#78b800', shape: 'L', name: 'L 60x6', vals: [] },
  { color: '#ff0000', shape: 'L', name: 'L 60x6', vals: [] },
  { color: '#8888ff', shape: 'L', name: 'L 50x5', vals: [] },
  { color: '#936728', shape: 'L', name: 'L 60x60x6 | EN 10056-1:1998', mat: '#5555dd', vals: ['1', '0.82', '36.10', '9.44', '6.91', '2.91', '2.84', '-45.00', '0.00', '60.0', '60.0'], comment: 'HB' },
  { color: '#2f5f00', shape: 'U', name: 'UPE 180 | DIN 1026-2:2002', mat: '#1818c8', vals: ['2', '6.99', '1353.00', '143.70', '25.10', '7.75', '11.20', '0.00', '0.00', '75.0', '180.0'], comment: 'Plate-forme n° 1' },
  { color: '#eec49c', shape: 'I', name: 'HE B 160 | DIN 1025-2:1995', mat: '#1818c8', vals: ['2', '31.40', '2490.00', '889.00', '54.30', '34.73', '10.82', '0.00', '0.00', '160.0', '160.0'], comment: 'Plate-forme n° 1' },
]

const SHAPES: Record<string, string> = { L: 'M2 0v8.500h8', U: 'M9 1.500H3v8h6', I: 'M0 1.500h11M5.500 1v8M0 9.500h11' }
const LETTERS = 'ABCDEFGHIJKLM'.split('')
const TABS = ['Nós', 'Materiais', 'Secções', 'Articulações de barras', 'Excentricidades das barras', 'Divisões de barras', 'Barras', 'Apoios nodais', 'Apoios elásticos de barras', 'Não-linearidades de barras', 'Conjuntos de barras']

const line = 'border-r border-b border-[#a0a0a0]'
const edge = 'border-r border-b border-[#777] font-normal shadow-[inset_1px_1px_0_#fff]'
const raised = clsx(edge, 'bg-[#e1e1e1]')

function SectionsPanel() {
  return (
    <section className="flex h-[291px] shrink-0 flex-col bg-[#f0f0f0]">
      <PanelTitle>1.3 Secções</PanelTitle>
      <div className="flex h-[25px] shrink-0 items-center bg-linear-to-b from-[#e9edf6] to-[#cfd4de] pl-2">
        {['sheet1', 'sheet2', 'sheet3', 'sheet4', 'sheet5'].map((n, i) => (
          <button key={n} type="button" aria-label={n} className={clsx('flex h-[22px] w-[22px] items-center justify-center', i === 0 && 'rounded-sm border border-[#b8955a] bg-[#fbd9a0]')}>
            <Icon name={n} size={16} />
          </button>
        ))}
      </div>
      <div className={clsx('flex h-[210px] shrink-0 items-start border-t border-l border-[#666] pt-0.5 pr-[3px] pl-px', GRID)}>
        <div className="min-w-0 grow">
          <table className="w-full table-fixed border-separate border-spacing-0 border-t border-l border-[#777] text-black">
            <colgroup>
              <col className="w-[46px]" />
              <col className="w-[221px]" />
              <col className="w-[54px]" />
              {LETTERS.slice(2, 8).map((l) => <col key={l} className="w-[66px]" />)}
              {LETTERS.slice(8, 12).map((l) => <col key={l} className="w-[72px]" />)}
              <col />
            </colgroup>
            <thead>
              <tr className="h-[15px] leading-[13px]">
                <th rowSpan={2} className={clsx(raised, 'leading-[14px]')}>Corte<br />nº</th>
                <th className={clsx(edge, 'bg-[#3399ff] text-white')}>A</th>
                {LETTERS.slice(1).map((l) => <th key={l} className={raised}>{l}</th>)}
              </tr>
              <tr className="h-8">
                {LETTERS.slice(0, 12).map((l) => <th key={l} className="border-b border-[#a0a0a0]" />)}
                <th className={clsx(line, 'pt-3 font-normal')}>Comentário</th>
              </tr>
            </thead>
            <tbody>
              {SECTIONS.map((s, i) => (
                <tr key={i} className="h-4 bg-white leading-[15px] whitespace-nowrap">
                  <th className={i === 0 ? clsx(edge, 'bg-[#3399ff] text-white') : raised}>{i + 1}</th>
                  <td className={line}>
                    <div className="flex items-center pl-px">
                      <span className="size-[13px] border border-[#333]" style={{ background: s.color }} />
                      <svg width="12" height="11" className="mx-0.5" fill="none" stroke="#3c4f88" strokeWidth="2"><path d={SHAPES[s.shape]} /></svg>
                      {s.name.split(' | ').map((part, k) => (
                        <span key={part} className={k ? 'ml-[3px] border-l border-[#6aa0e8] pl-[3px]' : ''}>{part}</span>
                      ))}
                    </div>
                  </td>
                  <td className={line}>
                    {s.mat && (
                      <div className="flex items-center">
                        <span className="size-[13px] border border-[#333]" style={{ background: s.mat }} />
                        <span className="grow pr-1 text-center">{s.vals[0]}</span>
                      </div>
                    )}
                  </td>
                  {LETTERS.slice(2, 12).map((l, k) => <td key={l} className={clsx(line, 'pr-1 text-right')}>{s.vals[k + 1]}</td>)}
                  <td className={clsx(line, 'pl-1')}>{s.comment}</td>
                </tr>
              ))}
            </tbody>
          </table>
        </div>
        <div className="ml-0.5 flex h-[192px] w-4 flex-col border-r border-[#a0a0a0]">
          <Chevron dir="up" />
          <div className="h-[75px] bg-[#cdcdcd]" />
          <div className="grow" />
          <Chevron dir="down" />
        </div>
      </div>
      <div role="tablist" className={clsx('flex border-t border-[#666]', GRID)}>
        {TABS.map((t) => (
          <button key={t} type="button" role="tab" aria-selected={t === 'Secções'} className={clsx('h-4 rounded-b-sm border-r border-b border-[#666] px-[3px] leading-[15px] whitespace-nowrap text-black', t === 'Secções' ? 'bg-[#f0f0f0]' : 'bg-[#e3e3e3]')}>
            {t}
          </button>
        ))}
      </div>
      <div className="mt-px border-t border-[#d5d5d5]" />
    </section>
  )
}

/* ---------- TOWER Loading window ---------- */

const ENTRIES: [string, string[]][] = [
  ['Dados de entrada', ['Dados gerais', 'Peso próprio', 'Carga do vento - parte 1', 'Cargas de vento - determinaçã', 'Proteção', 'Cargas do gelo - classe de gelo', 'Cargas do gelo - classe de gelo', 'Cargas variáveis']],
  ['Resultados', ['Casos de carga', 'Peso próprio e cargas de peso', 'Cargas de vento - coeficiente d', 'Cargas de vento - torre', 'Cargas de vento - contraventa', 'Cargas de vento - plataformas', 'Cargas de vento - antenas', 'Cargas de vento - tubo de exte', 'Cargas de vento - área de rese', 'Cargas de vento - vias de cabo', 'Cargas de vento - escadas']],
]

type Detail = [string] | [string, ReactNode, string, ReactNode, string]

const NF = 'NF EN 1991-1-4, '
const DETAILS: Detail[] = [
  ['Ao longo de todo o comprimento'],
  ['Expoente', 'α', '0.635', '', NF + 'Capítulo B.1'],
  ['Altura de referência', <>z <sub>s</sub></>, '10.260', 'm', NF + 'Figura 6.1'],
  ['Altura mínima', <>z <sub>mín</sub></>, '9.000', 'm', NF + 'Capítulo B.1'],
  ['Altura de referência', <>z <sub>t</sub></>, '200.000', 'm', NF + 'Capítulo B.1'],
  ['Comprimento de referência', <>L <sub>t</sub></>, '300.000', 'm', NF + 'Capítulo B.1'],
  ['Comprimento integral', <>L(z <sub>s</sub>)</>, '45.457', 'm', NF + 'Capítulo B.1'],
  ['Porção básica da rajada'],
  ['Altura da torre', 'h', '17.100', 'm', NF + 'Figura 6.1'],
  ['Largura da torre', 'b', '1.653', 'm', NF + 'Figura 6.1'],
  ['Porção básica da rajada', <>B <sup>2</sup></>, '0.660', '', NF + 'Capítulo B.3'],
  ['Logaritmo da diminuição do amortecimento da estrutura'],
  ['Logaritmo da diminuição do amorte', <>δ <sub>s</sub></>, '0.100', '', NF + 'Tabela F.2'],
  ['Logaritmo da diminuição do amortecimento aerodinâmico'],
  ['Coeficiente da força aerodinâmico', <>c <sub>f</sub>(média)</>, '2.946', '', 'NF EN 1993-3-1, Capítulo B.2'],
  ['Densidade do ar', 'ρ', '1.225', <>kg/m <sup>3</sup></>, ''],
  ['Velocidade média do vento', <>v <sub>m</sub>(z <sub>s</sub>)</>, '16.19', 'm/s', NF + 'Capítulo 4.3'],
  ['Massa equivalente', <>m <sub>e</sub></>, '426.49', 'kg/m', NF + 'Capítulo F.14'],
  ['Primeira frequência natural', <>n <sub>1</sub></>, '2.378', 'Hz', ''],
]

function DialogTree() {
  return (
    <div className="flex w-[176px] shrink-0 flex-col border border-[#a0a0a0] bg-[#fcfbf2]">
      <ul className="grow overflow-hidden pt-px">
        {ENTRIES.map(([group, items]) => (
          <li key={group}>
            <div className="h-4 pl-[5px] leading-4">{group}</div>
            <ul>
              {items.map((t, i) => (
                <li key={i} className="flex h-4 items-center pl-[13px] whitespace-nowrap">
                  <svg width="10" height="16" className="shrink-0" stroke="#777" strokeDasharray="1 1" aria-hidden="true">
                    <path d={i === items.length - 1 ? 'M.5 0v8' : 'M.5 0v16'} />
                    <path d="M1 8.500h8" />
                  </svg>
                  <a href="#" className={clsx('grow px-px leading-4', t.includes('coeficiente') && 'bg-[#f0f0f0]')}>{t}</a>
                </li>
              ))}
            </ul>
          </li>
        ))}
      </ul>
      <div className="flex bg-[#f0f0f0]">
        <Chevron dir="left" />
        <div className="w-[73px] bg-[#cdcdcd]" />
        <div className="grow" />
        <Chevron dir="right" />
      </div>
    </div>
  )
}

function FrequencyTable() {
  const rows = [['Sem gelo', '2.378', '0.932'], ['Classe de gelo G', '1.937', '0.947'], ['Classe de gelo R', '2.251', '0.933']]
  return (
    <table className="h-[243px] w-full table-fixed border-separate border-spacing-0 border border-[#a0a0a0] border-r-[#a3a3ee] border-b-[#a3a3ee]">
      <colgroup>
        <col className="w-[99px]" />
        <col className="w-[132px]" />
        <col className="w-[132px]" />
        <col />
      </colgroup>
      <thead>
        <tr className="h-[14px] leading-3">
          <th rowSpan={2} className="border-r border-b border-[#777] bg-[#e1e1e1] pb-1 font-normal">Descrição</th>
          <th className={clsx(edge, 'bg-[#0078d7] text-white')}>A</th>
          <th className={raised}>B</th>
          <th className={raised}>C</th>
        </tr>
        <tr className="h-8 leading-[15px] whitespace-nowrap">
          <th className={clsx(line, 'pb-0.5 font-normal')}>Primeira frequência natural<br />n <sub>1</sub> [Hz]</th>
          <th className={clsx(line, 'pb-0.5 font-normal')}>Coeficiente da estrutura<br />c <sub>s</sub>c <sub>d</sub></th>
          <th className={line} />
        </tr>
      </thead>
      <tbody>
        {rows.map(([name, a, b], i) => (
          <tr key={name} className="h-4 leading-[15px]">
            <th className={i === 0 ? clsx(edge, 'bg-[#0078d7] text-white') : raised}>{name}</th>
            <td className={clsx(line, 'pr-1 text-right', i === 0 && 'outline-1 -outline-offset-1 outline-black outline-dotted')}>{a}</td>
            <td className={clsx(line, 'pr-1 text-right')}>{b}</td>
            <td className={line} />
          </tr>
        ))}
        <tr>
          <td className="border-r border-[#a0a0a0] bg-[#e1e1e1]" />
          <td className="border-r border-[#a0a0a0] bg-[#e8efee]" />
          <td className="border-r border-[#a0a0a0] bg-[#e8efee]" />
          <td className="bg-[#e8efee]" />
        </tr>
      </tbody>
    </table>
  )
}

function DetailsTable() {
  return (
    <div className="flex grow flex-col border-r border-b border-[#a3a3ee]">
      <h3 className="h-4 bg-[#dbe5f4] pl-0.5 leading-4 text-[#1f4e79] [clip-path:polygon(0_0,calc(100%-9px)_0,100%_9px,100%_100%,0_100%)]">Detalhes&nbsp; -Descrição Sem gelo</h3>
      <div className="flex border-t border-l border-[#a0a0a0]">
        <div className="min-w-0 grow">
          <table className="w-full table-fixed border-separate border-spacing-0">
            <colgroup>
              <col className="w-[192px]" />
              <col className="w-[92px]" />
              <col className="w-[66px]" />
              <col className="w-[48px]" />
              <col />
            </colgroup>
            <tbody>
              {DETAILS.map((d, i) => {
                if (d.length === 1)
                  return (
                    <tr key={i} className="h-4 leading-[15px]">
                      <th colSpan={5} className="border-b border-[#a0a0a0] text-left font-normal">
                        <div className="flex items-center gap-[3px] pl-[3px]">
                          <svg width="9" height="9" aria-hidden="true"><path d="M.5.5h8v8h-8zM2 4.500h5" fill="none" stroke="#000" /></svg>
                          {d[0]}
                        </div>
                      </th>
                    </tr>
                  )
                const last = i + 1 < DETAILS.length && DETAILS[i + 1].length === 1
                return (
                  <tr key={i} className={clsx('h-4 leading-[15px] whitespace-nowrap', i === 4 && 'bg-[#dadada]')}>
                    <td className={line}>
                      <div className="flex h-[15px] overflow-hidden">
                        <svg width="25" height="15" className="shrink-0" stroke="#d0d0d0" aria-hidden="true"><path d={last ? 'M7.500 0v7' : 'M7.500 0v15'} /><path d="M8 7.500h11" /></svg>
                        {d[0]}
                      </div>
                    </td>
                    <td className={clsx(line, 'pl-1', i === 12 && 'outline-1 -outline-offset-1 outline-black')}>{d[1]}</td>
                    <td className={clsx(line, 'pr-1 text-right')}>{d[2]}</td>
                    <td className={clsx(line, 'pl-1')}>{d[3]}</td>
                    <td className="border-b border-[#a0a0a0] pl-1">{d[4]}</td>
                  </tr>
                )
              })}
            </tbody>
          </table>
        </div>
        <div className="flex w-4 flex-col border-r border-[#a0a0a0]">
          <Chevron dir="up" />
          <div className="h-[99px] bg-[#cdcdcd]" />
          <div className="grow" />
          <Chevron dir="down" />
        </div>
      </div>
      <div className="h-2 bg-[#e8efee]" />
      <div className="flex border-b border-[#a0a0a0]">
        <Chevron dir="left" />
        <div className="mr-[26px] grow bg-[#cdcdcd]" />
        <Chevron dir="right" />
      </div>
      <div className="flex grow items-center justify-end bg-[#f0f4f9] pr-[3px]">
        <ToolButton name="eye" />
      </div>
    </div>
  )
}

const ToolButton = ({ name, on }: { name: string; on?: boolean }) => (
  <button type="button" aria-label={name} className={clsx('flex h-[21px] w-[25px] items-center justify-center border', on ? 'border-[#005499] bg-[#cce4f7]' : 'border-[#adadad] bg-[#e1e1e1]')}>
    <Icon name={name} size={name === 'eye' ? 13 : 16} />
  </button>
)

/* lattice tower: undeformed in blue, mode shape in red */

type Pt = [number, number]

const at = (leg: Pt[], y: number): number => {
  for (let i = 1; i < leg.length; i++) {
    const [x0, y0] = leg[i - 1]
    const [x1, y1] = leg[i]
    if (y <= y1) return x0 + ((x1 - x0) * (y - y0)) / (y1 - y0)
  }
  return leg[leg.length - 1][0]
}

const poly = (pts: Pt[]) => 'M' + pts.map((p) => p.join(' ')).join('L')

// zigzag between two legs; `drop` is the height difference of their feet
function lacing(a: Pt[], b: Pt[], from: number, to: number, step: number, drop: number) {
  let d = ''
  for (let y = from; y < to - 4; y += step) {
    const mid = y + step / 2 + drop
    const end = Math.min(y + step, to)
    d += `M${at(a, y)} ${y}L${at(b, mid)} ${mid}L${at(a, end)} ${end}`
  }
  return d
}

const BL: Pt[] = [[1315.5, 410], [1315.5, 777]]
const BB: Pt[] = [[1333.5, 401.5], [1333.5, 770]]
const BF: Pt[] = [[1346, 415], [1346, 782]]
const BR: Pt[] = [[1364, 406.5], [1364, 774]]
const RL: Pt[] = [[1348.5, 416], [1346, 440], [1343, 496], [1336.5, 516], [1334.5, 560], [1332, 590], [1325, 629], [1319, 649], [1317, 692], [1315.5, 777]]
const RB: Pt[] = [[1364, 406.5], [1362, 440], [1359, 500], [1353.5, 540], [1350, 582], [1344, 615], [1342, 630], [1336, 663], [1334.5, 700], [1333.5, 770]]
const RF: Pt[] = [[1364, 418], [1361.5, 444], [1357, 500], [1354, 540], [1352, 578], [1348.5, 633], [1347, 700], [1346, 782]]
const RR: Pt[] = [[1382, 410.5], [1379, 435], [1376, 488], [1373.5, 535], [1370, 582], [1369, 605], [1367, 626], [1365, 669], [1364, 774]]

const ring = (y: number, [l, b, r, f]: Pt[][]) => poly([[at(l, y), y], [at(b, y - 8), y - 8], [at(r, y - 3), y - 3], [at(f, y + 6), y + 6]]) + 'Z'

function Triad({ x, y, r, g, b }: { x: number; y: number; r: Pt; g: Pt; b: Pt }) {
  return (
    <>
      <path d={`M${x} ${y}L${r[0]} ${r[1]}`} stroke="#f03030" strokeWidth="1.500" />
      <path d={`M${r[0] - 8} ${r[1] - 4}l9 4-10 1.500z`} fill="#b02020" />
      <path d={`M${x} ${y}L${g[0]} ${g[1]}`} stroke="#18e018" strokeWidth="1.500" />
      <path d={`M${g[0] - 1} ${g[1]}l5-4 3 4-6 2z`} fill="#10a010" />
      <path d={`M${x} ${y}L${b[0]} ${b[1]}`} stroke="#3030f0" strokeWidth="1.700" />
      <path d={`M${b[0] - 3} ${b[1] - 9}h6l-3 9z`} fill="#20208a" />
    </>
  )
}

function TowerView() {
  const blue = [BL, BB, BR, BF]
  const red = [RL, RB, RR, RF]
  return (
    <svg viewBox="1212 223 262 599" className="w-full grow bg-white" fill="none" role="img" aria-label="Modelo da torre">
      <g stroke="#7878e8">
        <path d="M1339.700 259v12" strokeWidth="1.500" />
        <path d="M1339.700 270v210" strokeWidth="5" stroke="#5a5ad8" />
        <path d="M1339.700 270v210" strokeWidth="1.500" stroke="#9a9af4" />
        <path d={poly(BL) + poly(BR)} strokeWidth="2" />
        <path d={poly(BB) + poly(BF)} strokeWidth="3" />
        <path d={ring(410, blue) + ring(422, blue) + ring(627, blue)} />
        <path d={lacing(BL, BB, 436, 487, 25, -7) + lacing(BL, BB, 489, 627, 23, -7) + lacing(BL, BB, 627, 777, 21, -7)} />
        <path d={lacing(BF, BR, 440, 492, 25, -8) + lacing(BF, BR, 494, 632, 23, -8) + lacing(BF, BR, 632, 780, 21, -8)} />
        <path d={lacing(BL, BF, 512, 777, 46, 5)} strokeWidth=".8" />
      </g>
      <g stroke="#3838b0" strokeWidth="2" fill="#5050c8" fillOpacity=".55">
        <path d={ring(433, blue) + ring(487, blue)} />
        <path d="M1316 433l48-2M1316 487l48-2M1333 426l12 12M1333 480l12 12" />
      </g>
      <g stroke="#ff0a0a">
        <path d="M1370.500 265L1363.500 410" />
        <path d={poly(RL) + poly(RB) + poly(RF) + poly(RR)} strokeWidth="1.300" />
        <path d={ring(418, red) + ring(430, red) + ring(442, red) + ring(494, red) + ring(628, red)} />
        <path d="M1343 497l32-9M1360 487l-3 14M1325 629l42-3M1344 622l4 10M1332 624l26 6" />
        <path d={lacing(RL, RF, 442, 494, 25, -4) + lacing(RF, RR, 444, 494, 25, -6)} />
        <path d={lacing(RL, RB, 500, 627, 23, -7) + lacing(RF, RR, 498, 632, 23, -6)} />
        <path d={lacing(RL, RB, 629, 777, 21, -7) + lacing(RF, RR, 633, 780, 21, -8)} />
        <path d={lacing(RL, RF, 670, 777, 53, 5)} />
      </g>
      <Triad x={1340} y={408} r={[1373, 412]} g={[1321, 416]} b={[1340, 445]} />
      <Triad x={1267} y={722} r={[1300, 727]} g={[1248, 730]} b={[1267, 759]} />
    </svg>
  )
}

function TowerDialog() {
  const push = 'h-[21px] border border-[#adadad] bg-[#e1e1e1] leading-[18px]'
  return (
    <div role="dialog" aria-labelledby="dialog-title" className="absolute top-[138px] left-[401px] flex w-[1085px] flex-col border border-[#6e6e6e] bg-[#f0f0f0] text-black shadow-[2px_3px_18px_1px_rgba(0,0,0,0.42)]">
      <div className="flex h-[31px] items-center bg-white pr-2.5 pb-0.5 pl-2">
        <svg width="17" height="17" viewBox="0 0 17 17" aria-hidden="true">
          <path d="M1 15L6 4h1l4 11M3 11h7" stroke="#6878b8" strokeWidth="2.500" fill="none" />
          <path d="M10 3h6M10 6h6M11 1v8M15 1v8" stroke="#5a6cb0" />
        </svg>
        <h2 id="dialog-title" className="ml-1 grow">TOWER Loading - [faq]</h2>
        <button type="button" aria-label="Fechar janela"><svg width="11" height="11"><path d="M.5.5l10 10M10.500.5l-10 10" stroke="#000" strokeWidth="1.200" /></svg></button>
      </div>
      <div className="flex h-[18px] items-center gap-[14px] bg-white pl-[7px]">
        <button type="button">Ficheiro</button>
        <button type="button">Configuração</button>
        <button type="button">Ajuda</button>
      </div>
      <div className={clsx('mt-[3px] flex border-t-2 border-[#a0a0a0] pr-[3px] pl-px', GRID)}>
        <DialogTree />
        <div className="ml-[3px] flex min-w-0 grow flex-col border-r border-b border-[#a0a0a0] pb-3">
          <h3 className={clsx('mt-px h-5 bg-[#bfcbd9] pl-1.5 leading-5', UI)}>2.3 Cargas de vento - coeficiente da estrutura</h3>
          <div className="flex grow gap-2 pt-[9px] pr-[7px] pl-2">
            <div className="flex w-[614px] shrink-0 flex-col gap-[11px]">
              <FrequencyTable />
              <DetailsTable />
            </div>
            <div className="flex min-w-0 grow flex-col border-r border-b border-[#a3a3ee]">
              <TowerView />
              <div className="flex shrink-0 items-center gap-[5px] bg-[#f0f4f9] pt-1 pr-[3px] pb-px pl-1">
                <ToolButton name="legend" on />
                <ToolButton name="solid" on />
                <div className="grow" />
                <ToolButton name="viewX" />
                <ToolButton name="viewMY" />
                <ToolButton name="viewZ" />
                <div className="w-0" />
                <ToolButton name="cube" />
              </div>
            </div>
          </div>
        </div>
      </div>
      <div className="flex items-center border-t border-white pt-2.5 pr-[10px] pb-[7px] pl-[9px]">
        <ToolButton name="help" />
        <span className="ml-[9px] flex gap-[5px]">
          <ToolButton name="back" />
          <ToolButton name="forward" />
        </span>
        <button type="button" className={clsx(push, 'ml-[82px] w-[81px]')}>Exportar</button>
        <button type="button" className={clsx(push, 'ml-[9px] w-[81px]')}>Detalhes...</button>
        <div className="grow" />
        <button type="button" className="h-[21px] w-[73px] border-2 border-[#0078d7] bg-[#e1e1e1] leading-4">OK</button>
        <button type="button" className={clsx(push, 'ml-[9px] w-[73px]')}>Cancelar</button>
      </div>
      <div className="flex items-end">
        <div className="mb-[3px] h-5 grow border border-t-[#a0a0a0] border-r-white border-b-white border-l-[#a0a0a0]" />
        <svg width="18" height="12" aria-hidden="true"><path d="M7 12L18 1M11 12l7-7M15 12l3-3" stroke="#888" /></svg>
      </div>
    </div>
  )
}

/* ---------- status bar ---------- */

function StatusBar() {
  return (
    <footer className="flex h-5 shrink-0 items-stretch border-t border-[#9aa1ad] bg-linear-to-b from-[#dde1e8] to-[#a8aeb9] text-[#222]">
      <div className="grow" />
      {['AJUSTAR', 'GRELHA', 'CARTES', 'AJUST. OBJ.', 'LINHAS AUX.', 'DXF'].map((t) => (
        <button key={t} type="button" className={clsx('mt-px mr-px border px-px leading-[17px] whitespace-nowrap', t === 'GRELHA' ? 'border-t-white border-r-[#777] border-b-transparent border-l-white' : 'border-t-black border-r-white border-b-transparent border-l-black')}>
          {t}
        </button>
      ))}
      <div className="grid w-[497px] grid-cols-[189px_88px_74px_74px_1fr]">
        {[0, 1, 2, 3, 4].map((i) => <span key={i} className="border-l border-[#8f959f]" />)}
      </div>
    </footer>
  )
}

const ArrowCallout = () => (
  <svg width="360" height="260" viewBox="250 265 360 260" className="pointer-events-none absolute top-[265px] left-[250px] drop-shadow-[4px_6px_3px_rgba(0,0,0,0.4)]" aria-hidden="true">
    <path d="M273 498L580 290" stroke="#c00000" strokeWidth="4" />
    <path d="M261 506l11-18 11 16zM592 283l-22 4 11 15z" fill="#c00000" />
  </svg>
)

export default function App() {
  return (
    <div className={clsx('relative flex h-screen flex-col overflow-hidden bg-[#d0d4dc]', UI)}>
      <AppHeader />
      <div className="flex min-h-0 grow">
        <Navigator />
        <main className="ml-[5px] flex min-w-0 grow flex-col">
          <div className="mb-1.5 min-h-0 grow border-t-2 border-l border-[#666] bg-white pt-8 pl-[297px]">
            <svg width="162" height="5" className="bg-[#f8f8f8]" aria-hidden="true"><path d="M71 4.500h7" stroke="#4040c0" /><path d="M117 4.500h1" stroke="#d02020" /></svg>
          </div>
          <SectionsPanel />
        </main>
      </div>
      <StatusBar />
      <TowerDialog />
      <ArrowCallout />
    </div>
  )
}
